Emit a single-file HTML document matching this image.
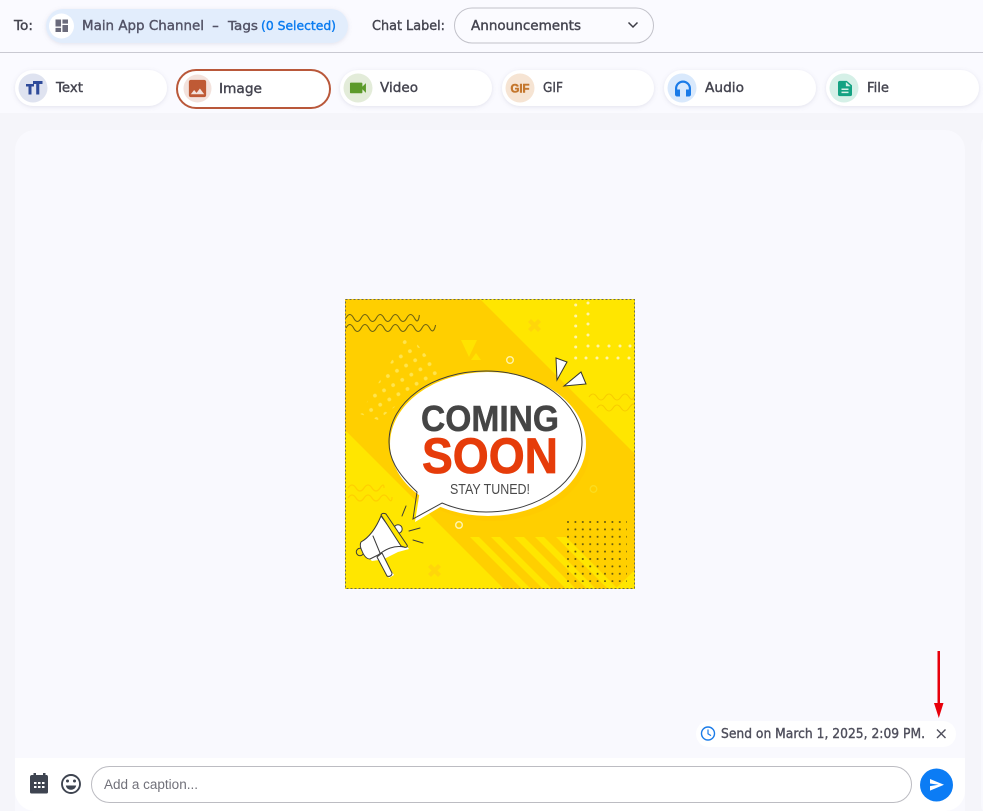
<!DOCTYPE html>
<html lang="en">
<head>
<meta charset="utf-8">
<title>Compose Image Message</title>
<style>
html,body{margin:0;padding:0;width:983px;height:811px;overflow:hidden;background:#f5f5fa}
svg{display:block}
.t{font-family:"DejaVu Sans","Liberation Sans",sans-serif;font-size:13px;fill:#44444f;stroke:#44444f;stroke-width:.38}
.g{fill:#535366;stroke:#535366}
.b{fill:#0b7cf0;stroke:#0b7cf0;font-size:12px}
.c{font-family:"Liberation Sans",sans-serif}
</style>
</head>
<body>
<svg width="983" height="811" viewBox="0 0 983 811" xmlns="http://www.w3.org/2000/svg">
<defs>
<filter id="s" x="-10%" y="-30%" width="120%" height="170%"><feDropShadow dx="0" dy="1" stdDeviation="2" flood-color="#8888a8" flood-opacity=".22"/></filter>
<pattern id="dark" x="567" y="521" width="7.4" height="7.4" patternUnits="userSpaceOnUse"><circle cx="1" cy="1" r="1" fill="#5f5410"/></pattern>
<pattern id="halft" width="10.5" height="10.5" patternUnits="userSpaceOnUse" patternTransform="rotate(-30 400 380)"><circle cx="3" cy="3" r="1.900" fill="#ffe44e"/></pattern>
<clipPath id="img"><rect x="345" y="299" width="290" height="290"/></clipPath>
</defs>

<!-- page -->
<rect width="983" height="811" fill="#f5f5fa"/>
<rect width="983" height="113" fill="#fafaff"/>
<rect y="52" width="983" height="1" fill="#c9c9d2"/>
<rect x="15" y="130" width="950" height="700" rx="20" fill="#f9f9fe"/>
<rect x="981" y="135" width="20" height="680" rx="10" fill="#f9f9fe"/>

<!-- header -->
<text class="t" x="14" y="30" textLength="19" lengthAdjust="spacingAndGlyphs">To:</text>
<rect x="46" y="9" width="302" height="34" rx="17" fill="#e2edfc" filter="url(#s)"/>
<circle cx="61.500" cy="26" r="12.500" fill="#fff"/>
<svg x="55.500" y="19.500" width="12.500" height="12.500" viewBox="3 3 18 18"><path fill="#6b6b7b" d="M3 13h8V3H3zm0 8h8v-6H3zm10 0h8V11h-8zm0-18v6h8V3z"/></svg>
<text class="t g" x="82" y="30" textLength="122" lengthAdjust="spacingAndGlyphs">Main App Channel</text>
<text class="t g" x="212" y="30" textLength="7" lengthAdjust="spacingAndGlyphs">-</text>
<text class="t g" x="228" y="30" textLength="30" lengthAdjust="spacingAndGlyphs" style="font-size:12px">Tags</text>
<text class="t b" x="261" y="30" textLength="75" lengthAdjust="spacingAndGlyphs">(0 Selected)</text>
<text class="t" x="372" y="30" textLength="73" lengthAdjust="spacingAndGlyphs">Chat Label:</text>
<rect x="454.500" y="8" width="199" height="35" rx="17.500" fill="#fbfbff" stroke="#c2c2ca"/>
<text class="t" x="471" y="30" textLength="110" lengthAdjust="spacingAndGlyphs">Announcements</text>
<path d="M628.500 22.500 633 27l4.500-4.500" fill="none" stroke="#3c3c46" stroke-width="1.500"/>

<!-- tabs -->
<g fill="#fff" filter="url(#s)">
<rect x="15" y="70" width="152" height="36" rx="18"/>
<rect x="340" y="70" width="152" height="36" rx="18"/>
<rect x="502" y="70" width="152" height="36" rx="18"/>
<rect x="664" y="70" width="152" height="36" rx="18"/>
<rect x="826" y="70" width="153" height="36" rx="18"/>
</g>
<rect x="177" y="70" width="153" height="38" rx="19" fill="#fff" stroke="#b9583a" stroke-width="2"/>

<circle cx="33" cy="88" r="14.500" fill="#dfe3f0"/>
<path fill="#2f4b9a" d="M26 84h8v2.500h-2.500V94.500h-3V86.500H26zM33 81h9.500v3h-3.200V94.500h-3.100V84H33z"/>
<text class="t" x="56" y="92" textLength="27" lengthAdjust="spacingAndGlyphs">Text</text>

<circle cx="197.500" cy="88.500" r="14" fill="#f3e2dc"/>
<svg x="186" y="77" width="23" height="23" viewBox="0 0 24 24"><path fill="#bf5a35" d="M21 19V5c0-1.100-.9-2-2-2H5c-1.100 0-2 .9-2 2v14c0 1.100.9 2 2 2h14c1.100 0 2-.9 2-2zM8.500 13.500l2.500 3.010L14.500 12l4.500 6H5l3.500-4.500z"/></svg>
<text class="t" x="219" y="93" textLength="43" lengthAdjust="spacingAndGlyphs">Image</text>

<circle cx="358" cy="88" r="14.500" fill="#e3ecd9"/>
<svg x="347.300" y="77.300" width="21.300" height="21.300" viewBox="0 0 24 24"><path fill="#5c9a2a" d="M17 10.500V7c0-.55-.45-1-1-1H4c-.55 0-1 .45-1 1v10c0 .55.45 1 1 1h12c.55 0 1-.45 1-1v-3.500l4 4v-11l-4 4z"/></svg>
<text class="t" x="380" y="92" textLength="38" lengthAdjust="spacingAndGlyphs">Video</text>

<circle cx="520" cy="88" r="14.500" fill="#f6e4d3"/>
<text class="c" x="510.500" y="92.500" textLength="19" lengthAdjust="spacingAndGlyphs" font-size="12" font-weight="700" fill="#c4762c" stroke="#c4762c" stroke-width=".5">GIF</text>
<text class="t" x="543" y="92" textLength="20" lengthAdjust="spacingAndGlyphs">GIF</text>

<circle cx="682" cy="88" r="14.500" fill="#d9e9fc"/>
<svg x="671" y="76.500" width="24" height="24" viewBox="0 0 24 24"><path fill="#1a7be8" d="M12 4a8 8 0 0 0-8 8v6c0 1.100.9 2 2 2h3v-7H6.200v-1a5.800 5.800 0 0 1 11.600 0v1H15v7h3c1.100 0 2-.9 2-2v-6a8 8 0 0 0-8-8z"/></svg>
<text class="t" x="705" y="92" textLength="39" lengthAdjust="spacingAndGlyphs">Audio</text>

<circle cx="844" cy="88" r="14.500" fill="#d5f0e7"/>
<svg x="834.500" y="79.300" width="21" height="18.400" viewBox="0 0 24 24" preserveAspectRatio="none"><path fill="#14a282" d="M14 2H6c-1.100 0-2 .9-2 2v16c0 1.100.9 2 2 2h12c1.100 0 2-.9 2-2V8l-6-6zm2 16H8v-2h8v2zm0-4H8v-2h8v2zm-3-5V3.500L18.500 9H13z"/></svg>
<text class="t" x="867" y="92" textLength="22" lengthAdjust="spacingAndGlyphs">File</text>

<!-- coming soon image -->
<g clip-path="url(#img)">
<rect x="345" y="299" width="290" height="290" fill="#ffe600"/>
<path fill="#ffcf00" d="M345 299H480L635 454V589H504L345 430z"/>
<path fill="#ffe600" d="M635 570V589H615z"/>
<path fill="#ffe600" d="M470 537h9l52 52h-9zM491 537h9l52 52h-9zM514 537h10l52 52h-10zM535 537h9l52 52h-9zM556 537h10l52 52h-10z"/>
<!-- halftone left -->
<path fill="url(#halft)" d="M408 333 440 372 378 420 360 414z"/>
<!-- waves -->
<path d="M346 318q3.800-7 7.600 0t7.600 0 7.600 0 7.600 0 7.600 0 7.600 0 7.600 0 7.600 0 7.600 0 5-3" fill="none" stroke="#6f6312" stroke-width="1.100"/>
<path d="M346 328q3.800-7 7.600 0t7.600 0 7.600 0 7.600 0 7.600 0 7.600 0 7.600 0 7.600 0 7.600 0 7.600 0 7.600 0 6-3" fill="none" stroke="#6f6312" stroke-width="1.100"/>
<path d="M589 397q4-6 8 0t8 0 8 0 8 0 8 0 6-3M597 408q4-6 8 0t8 0 8 0 8 0 6-3" fill="none" stroke="#f7cc00" stroke-width="1.100"/>
<path d="M348 488q4-6 8 0t8 0 8 0 8 0 4 0M348 498q4-6 8 0t8 0 8 0 8 0 8 0 4-1" fill="none" stroke="#ffcf00" stroke-width="1.200"/>
<!-- white dots top right -->
<g fill="#fff4a8">
<circle cx="575.700" cy="305" r="1.500"/><circle cx="575.700" cy="316" r="1.500"/><circle cx="575.700" cy="326" r="1.500"/><circle cx="575.700" cy="337" r="1.500"/><circle cx="575.700" cy="347" r="1.500"/><circle cx="575.700" cy="358" r="1.500"/>
<circle cx="588" cy="303" r="1.500"/><circle cx="588" cy="314" r="1.500"/><circle cx="588" cy="324" r="1.500"/><circle cx="588" cy="335" r="1.500"/><circle cx="588" cy="346" r="1.500"/>
<circle cx="598" cy="346" r="1.500"/><circle cx="609" cy="346" r="1.500"/><circle cx="620" cy="346" r="1.500"/><circle cx="630" cy="346" r="1.500"/>
<circle cx="586" cy="358" r="1.500"/><circle cx="597" cy="358" r="1.500"/><circle cx="607" cy="358" r="1.500"/><circle cx="618" cy="358" r="1.500"/><circle cx="629" cy="358" r="1.500"/>
</g>
<!-- small shapes -->
<path d="M531 319l3.500 3.500 3.500-3.500 3 3-3.500 3.500 3.500 3.500-3 3-3.500-3.500-3.500 3.500-3-3 3.500-3.500-3.500-3.500z" fill="#ffd60a"/>
<path d="M431 564l3.500 3.500 3.500-3.500 3 3-3.500 3.500 3.500 3.500-3 3-3.500-3.500-3.500 3.500-3-3 3.500-3.500-3.500-3.500z" fill="#ffd60a"/>
<path d="M461 340h16l-8 17zM476 353l5 7h-10z" fill="#ffe300"/>
<circle cx="510" cy="360" r="3.300" fill="none" stroke="#fff3a8" stroke-width="1.400"/>
<circle cx="459" cy="525" r="3.300" fill="none" stroke="#fff3a8" stroke-width="1.500"/>
<circle cx="593.500" cy="489" r="3.300" fill="none" stroke="#fbdc20" stroke-width="1.300"/>
<rect x="567" y="521" width="60" height="61" fill="url(#dark)"/>
<!-- sparks -->
<path d="M556 358l11 4-10 18z" fill="#fff" stroke="#333" stroke-width="1"/>
<path d="M564 386l17-14 5 12z" fill="#fff" stroke="#333" stroke-width="1"/>
<!-- bubble -->
<ellipse cx="492" cy="449" rx="98" ry="72" fill="#ffc800" opacity=".55"/>
<ellipse cx="488" cy="444" rx="98" ry="72" fill="#fff"/>
<path d="M420 490l-5 32 32-19z" fill="#fff"/>
<path d="M417 492C396 472 389 458 389 442 389 402 432 371 486 371c53 0 96 32 96 71s-43 70-96 70c-16 0-30-3-44-9l-29 16z" fill="none" stroke="#3c3c3c" stroke-width="1"/>
<text class="c" x="421" y="431" textLength="138" lengthAdjust="spacingAndGlyphs" font-size="36" font-weight="700" fill="#454545" stroke="#454545" stroke-width=".5">COMING</text>
<text class="c" x="422" y="473" textLength="136" lengthAdjust="spacingAndGlyphs" font-size="50" font-weight="700" fill="#e63c0a" stroke="#e63c0a" stroke-width=".8">SOON</text>
<text class="c" x="450" y="494" textLength="80" lengthAdjust="spacingAndGlyphs" font-size="14.500" fill="#4a4a4a">STAY TUNED!</text>
<!-- megaphone -->
<path d="M363 544C372 539 378 530 383 518L409 549 398 552 384 559 394 575 389 578 379 560 372 561 365 555z" fill="#fff"/>
<g stroke="#3a3a3a" stroke-width="1" stroke-linejoin="round" stroke-linecap="round">
<path d="M377 557l5-4 10 20c0 3-3 4-5 3z" fill="#fff"/>
<circle cx="360" cy="552" r="3.700" fill="#ffe600"/>
<circle cx="398" cy="529" r="4.200" fill="#fff"/>
<path d="M361 542C370 537 376 528 381 516L404 547C394 545 386 549 378 555L370 559C367 559 364 556 362 551 360 547 360 544 361 542z" fill="#fff"/>
<path d="M381 515c1-2 3-2 5-1l21 31c1 2-1 3-3 2l-3-1z" fill="#ffe600"/>
<path d="M373 536l7 17M406 506l-4 10M420 528l-11 3M423 543l-10-3" fill="none"/>
</g>
</g>
<rect x="345.500" y="299.500" width="289" height="289" fill="none" stroke="#6a6a52" stroke-width="1" stroke-dasharray="2 2"/>

<!-- schedule pill -->
<rect x="696" y="721" width="260" height="26" rx="13" fill="#fff"/>
<circle cx="708" cy="733.500" r="6.500" fill="none" stroke="#1a7be8" stroke-width="1.400"/>
<path d="M708 729.500v4.300l3 1.800" fill="none" stroke="#1a7be8" stroke-width="1.200"/>
<text class="t" x="721" y="738" textLength="204" lengthAdjust="spacingAndGlyphs" style="fill:#4f4f5c;stroke:#4f4f5c">Send on March 1, 2025, 2:09 PM.</text>
<path d="M937 729.500l8.500 8.500M945.500 729.500l-8.500 8.500" stroke="#4f4f5c" stroke-width="1.400" fill="none"/>
<!-- arrow -->
<rect x="937.500" y="651" width="2.500" height="53" fill="#e8000b"/>
<path d="M934 703h9.500l-4.700 15z" fill="#e8000b"/>

<!-- compose bar -->
<path d="M15 758H965V791a20 20 0 0 1-20 20H35a20 20 0 0 1-20-20z" fill="#fff"/>
<path fill="#3e4450" d="M30 777a2 2 0 0 1 2-2h1.500v-2H36v2h7v-2h2.500v2H47a2 2 0 0 1 1 2v15a1.500 1.500 0 0 1-1.500 1.500h-15A1.500 1.500 0 0 1 30 792z"/>
<g fill="#fff"><rect x="34" y="782" width="2.500" height="2"/><rect x="38" y="782" width="2.500" height="2"/><rect x="42" y="782" width="2.500" height="2"/><rect x="34" y="786" width="2.500" height="2"/><rect x="38" y="786" width="2.500" height="2"/><rect x="42" y="786" width="2.500" height="2"/></g>
<circle cx="71" cy="784" r="9" fill="none" stroke="#3e4450" stroke-width="1.900"/>
<circle cx="67.500" cy="781" r="1.500" fill="#3e4450"/><circle cx="74.500" cy="781" r="1.500" fill="#3e4450"/>
<path d="M65.800 785.500h10.400c-.6 2.800-2.700 4.300-5.200 4.300s-4.600-1.500-5.200-4.300z" fill="#3e4450"/>
<rect x="91.500" y="766.500" width="820" height="36" rx="18" fill="#fff" stroke="#bcbcc2"/>
<text class="c" x="104" y="789" textLength="94" lengthAdjust="spacingAndGlyphs" font-size="13.500" fill="#71717a">Add a caption...</text>
<circle cx="936.500" cy="785" r="16.500" fill="#0b7cf5"/>
<path fill="#fff" d="M930 779l14 5.800-14 5.800v-4.500l8.500-1.300-8.500-1.300z"/>
</svg>
</body>
</html>
